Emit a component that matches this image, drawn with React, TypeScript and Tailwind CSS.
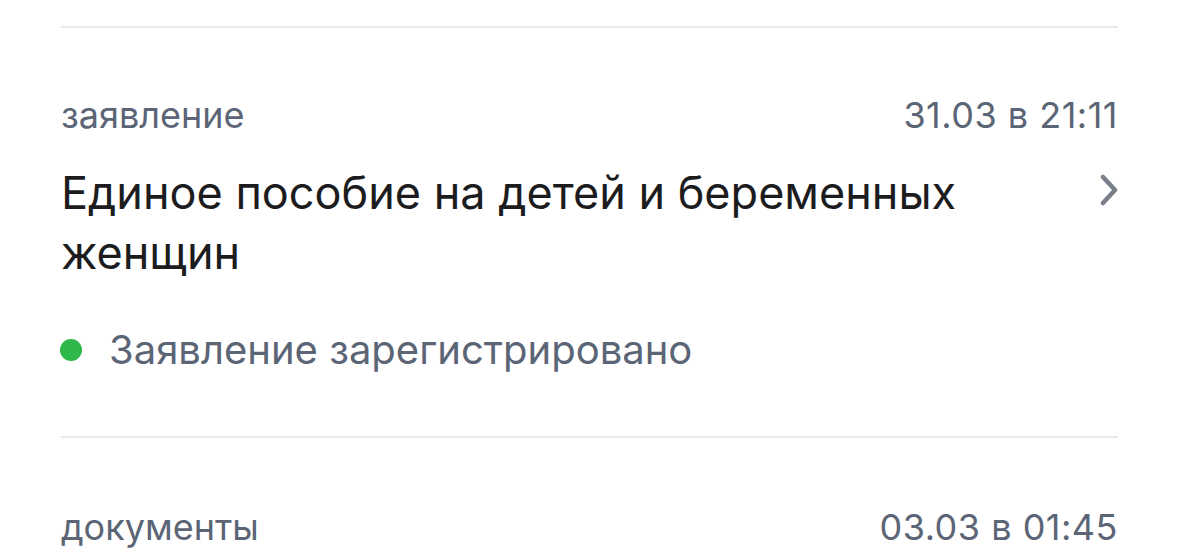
export default function App() {
  return (
    <div className="h-[560px] w-[1179px] overflow-hidden bg-white px-[61px] font-['Inter','Noto_Sans',sans-serif]">
      <div className="pt-[26px]">
        <div className="h-[2px] bg-[#e8e9ec]" />
      </div>

      {/* APPLICATION ITEM */}
      <div className="pt-[67px]">
        <div className="flex items-center justify-between text-[36px] leading-[40px] text-[#5b6576]">
          <span>заявление</span>
          <span className="tracking-[0.5px]">31.03 в 21:11</span>
        </div>
        <div className="mt-[28px] flex items-start justify-between">
          <p className="w-[940px] text-[45px] leading-[60px] text-[#1c1c1e]">
            Единое пособие на детей и беременных женщин
          </p>
          <svg width="22" height="32" viewBox="0 0 22 32" className="mr-[-2px] mt-[11px]">
            <path d="M5 3 L17 16 L5 29" fill="none" stroke="#7a8089" strokeWidth="4.5" strokeLinecap="round" strokeLinejoin="round" />
          </svg>
        </div>
        <div className="mt-[45px] flex items-center">
          <span className="ml-[-1px] h-[22px] w-[22px] rounded-full bg-[#2fb84a]" />
          <span className="ml-[27px] text-[40px] leading-[44px] text-[#5b6576]">Заявление зарегистрировано</span>
        </div>
      </div>

      <div className="pt-[64px]">
        <div className="h-[2px] bg-[#e8e9ec]" />
      </div>

      {/* DOCUMENTS ITEM */}
      <div className="pt-[69px]">
        <div className="flex items-center justify-between text-[36px] leading-[40px] text-[#5b6576]">
          <span>документы</span>
          <span className="tracking-[0.5px]">03.03 в 01:45</span>
        </div>
      </div>
    </div>
  )
}
